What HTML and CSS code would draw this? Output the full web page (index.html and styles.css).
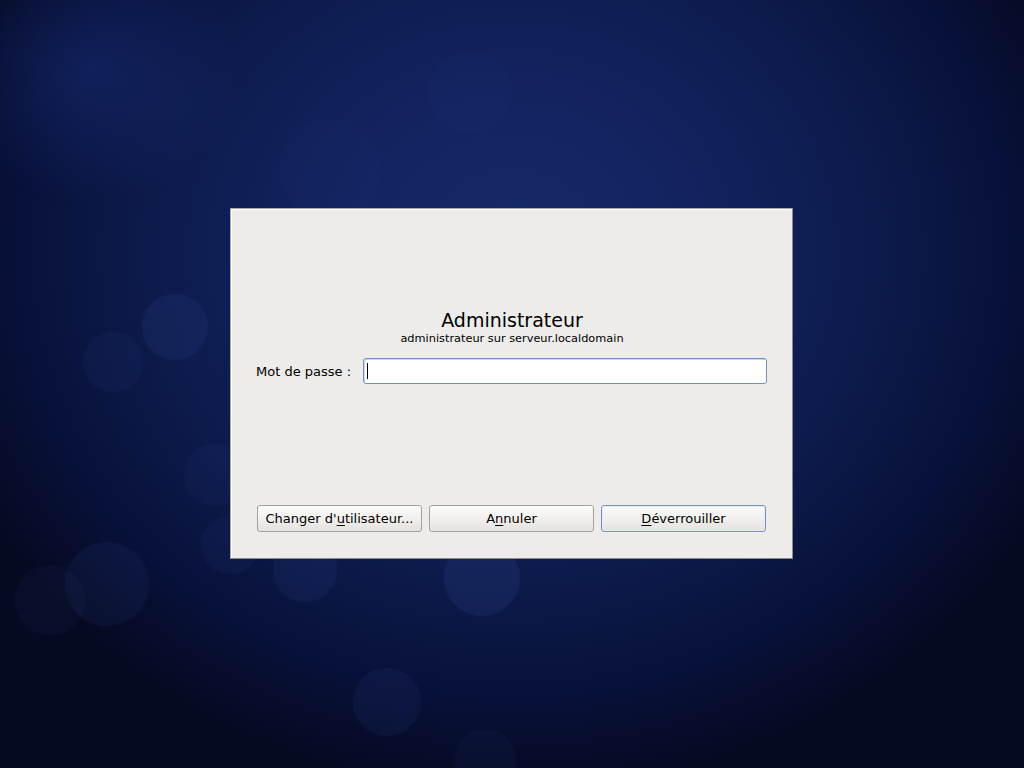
FILE: index.html
```html
<!DOCTYPE html>
<html lang="fr">
<head>
<meta charset="utf-8">
<title>Déverrouiller</title>
<link rel="stylesheet" href="styles.css">
</head>
<body>
<div class="desktop">
  <div class="dialog">
    <div class="header">
      <div class="title">Administrateur</div>
      <div class="subtitle">administrateur sur serveur.localdomain</div>
    </div>
    <div class="field">
      <span class="label">Mot de passe :</span>
      <div class="entry"><span class="caret"></span></div>
    </div>
    <div class="spacer"></div>
    <div class="buttons">
      <button class="btn">Changer d'<u>u</u>tilisateur...</button>
      <button class="btn">A<u>n</u>nuler</button>
      <button class="btn btn-default"><u>D</u>éverrouiller</button>
    </div>
  </div>
</div>
</body>
</html>
```

FILE: styles.css
```css
html, body {
  margin: 0;
  padding: 0;
  width: 1024px;
  height: 768px;
  overflow: hidden;
}

body {
  font-family: "DejaVu Sans", sans-serif;
}

.desktop {
  position: relative;
  width: 1024px;
  height: 768px;
  background:
    radial-gradient(circle at 175px 327px, rgba(70, 100, 190, 0.10) 0, rgba(70, 100, 190, 0.10) 32px, transparent 34px),
    radial-gradient(circle at 113px 362px, rgba(70, 100, 190, 0.06) 0, rgba(70, 100, 190, 0.06) 29px, transparent 31px),
    radial-gradient(circle at 107px 584px, rgba(70, 100, 190, 0.08) 0, rgba(70, 100, 190, 0.08) 41px, transparent 43px),
    radial-gradient(circle at 50px 600px, rgba(70, 100, 190, 0.05) 0, rgba(70, 100, 190, 0.05) 34px, transparent 36px),
    radial-gradient(circle at 230px 545px, rgba(70, 100, 190, 0.06) 0, rgba(70, 100, 190, 0.06) 28px, transparent 30px),
    radial-gradient(circle at 215px 475px, rgba(70, 100, 190, 0.05) 0, rgba(70, 100, 190, 0.05) 30px, transparent 32px),
    radial-gradient(circle at 305px 570px, rgba(70, 100, 190, 0.09) 0, rgba(70, 100, 190, 0.09) 31px, transparent 33px),
    radial-gradient(circle at 482px 578px, rgba(80, 110, 200, 0.11) 0, rgba(80, 110, 200, 0.11) 37px, transparent 39px),
    radial-gradient(circle at 387px 702px, rgba(70, 100, 190, 0.08) 0, rgba(70, 100, 190, 0.08) 33px, transparent 35px),
    radial-gradient(circle at 470px 92px, rgba(70, 100, 190, 0.025) 0, rgba(70, 100, 190, 0.025) 40px, transparent 42px),
    radial-gradient(circle at 330px 170px, rgba(70, 100, 190, 0.02) 0, rgba(70, 100, 190, 0.02) 50px, transparent 52px),
    radial-gradient(circle at 485px 760px, rgba(70, 100, 190, 0.05) 0, rgba(70, 100, 190, 0.05) 30px, transparent 32px),
    radial-gradient(ellipse 150px 130px at 90px 70px, rgba(25, 45, 120, 0.5), transparent 100%),
    radial-gradient(ellipse 600px 540px at 512px 250px, #16296a 0%, #122360 30%, #0d1b4c 60%, #08113a 82%, #050a22 100%);
  background-color: #050a20;
}

.dialog {
  position: absolute;
  left: 230px;
  top: 208px;
  box-sizing: border-box;
  width: 563px;
  height: 351px;
  background: #edecea;
  border: 1px solid #a8a7a4;
  border-right-color: #8c8b88;
  border-bottom-color: #8c8b88;
  box-shadow: inset 1px 1px 0 #ffffff;
  padding: 100px 25px 26px 26px;
  display: flex;
  flex-direction: column;
  color: #000;
}

.header {
  display: flex;
  flex-direction: column;
  align-items: center;
}

.title {
  font-size: 19px;
  line-height: 22px;
  color: #000;
}

.subtitle {
  font-size: 11.33px;
  line-height: 14px;
  color: #000;
}

.field {
  margin-top: 13px;
  display: flex;
  align-items: center;
  gap: 12px;
}

.label {
  font-size: 13px;
  margin-left: -1px;
  flex: none;
}

.entry {
  flex: 1;
  height: 26px;
  box-sizing: border-box;
  background: #ffffff;
  border: 1px solid #7191c2;
  border-radius: 3px;
  box-shadow: inset 1px 1px 0 #c9d5e8;
  display: flex;
  align-items: center;
  padding-left: 3px;
}

.caret {
  display: block;
  width: 1px;
  height: 16px;
  background: #000;
}

.spacer {
  flex: 1;
}

.buttons {
  display: grid;
  grid-template-columns: repeat(3, 165px);
  gap: 7px;
}

.btn {
  height: 27px;
  box-sizing: border-box;
  margin: 0;
  padding: 0;
  font-family: "DejaVu Sans", sans-serif;
  font-size: 13px;
  color: #000;
  background: linear-gradient(#fbfbfa 0%, #f1f0ee 50%, #e3e2df 100%);
  border: 1px solid #a3a29f;
  border-radius: 3px;
  box-shadow: inset 0 1px 0 #ffffff;
}

.btn u {
  text-decoration-thickness: 1px;
  text-underline-offset: 2px;
}

.btn-default {
  border-color: #7594c4;
  box-shadow: inset 0 0 0 1px #e4ebf5;
}
```
